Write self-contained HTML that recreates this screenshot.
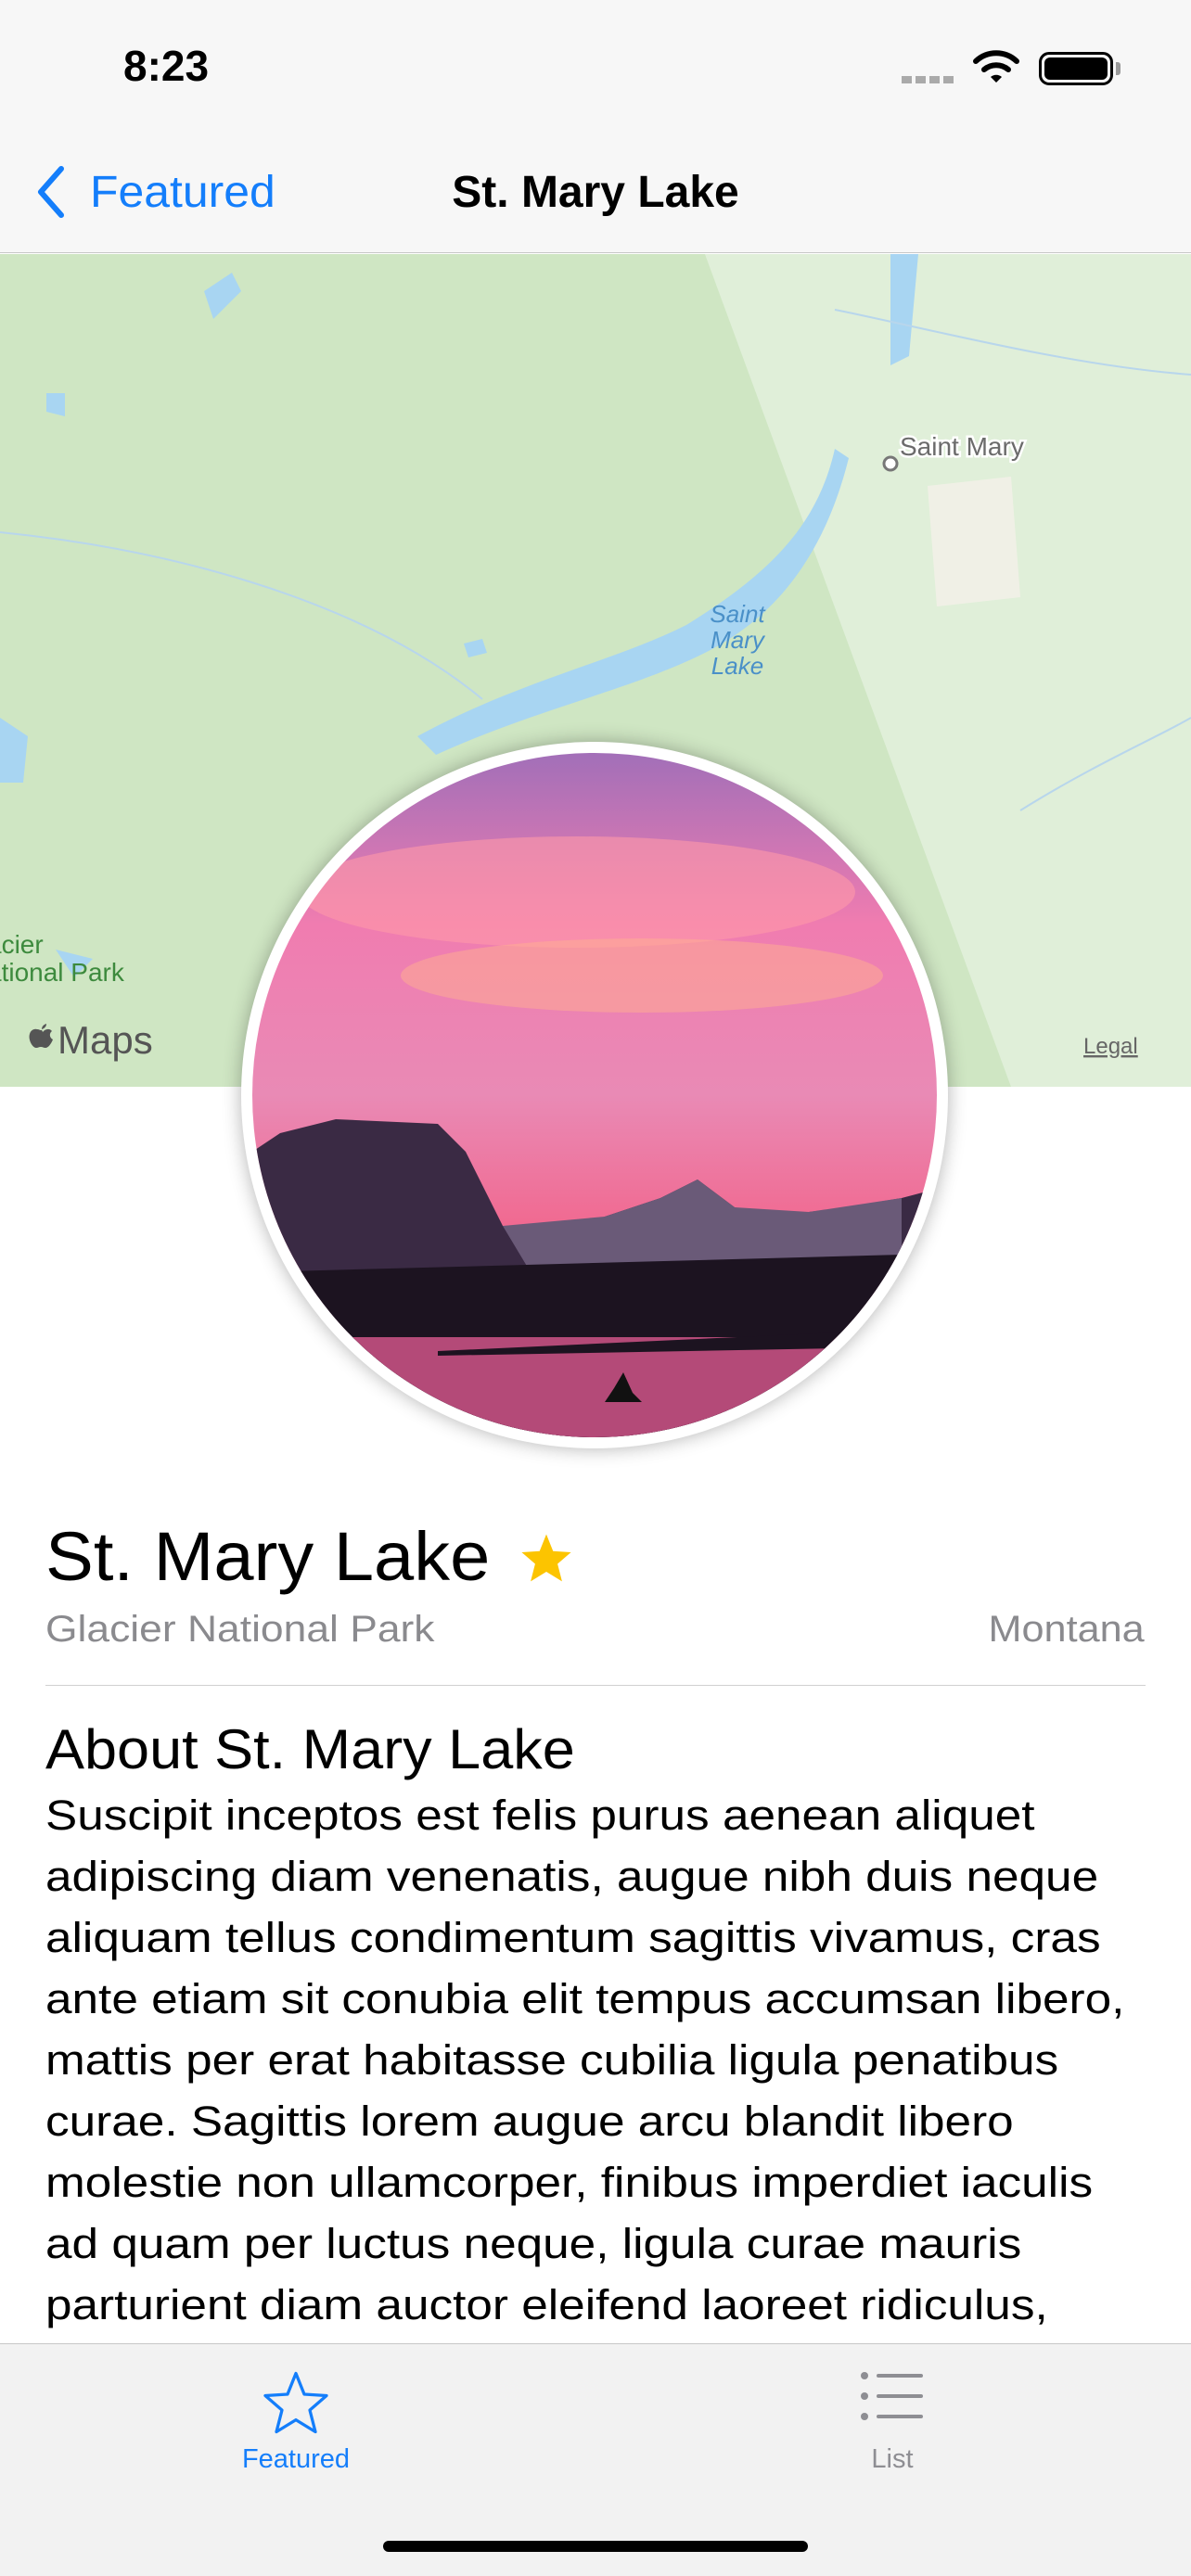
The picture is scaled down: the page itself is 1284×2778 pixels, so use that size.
<!DOCTYPE html>
<html><head><meta charset="utf-8"><style>
*{margin:0;padding:0;box-sizing:border-box}
body{width:1284px;height:2778px;background:#fff;font-family:"Liberation Sans",sans-serif;position:relative;overflow:hidden;color:#000}
.abs{position:absolute}
.sx{transform-origin:0 0}
</style></head><body>
<div class="abs" style="left:0;top:0;width:1284px;height:273px;background:#f7f7f7;border-bottom:1px solid #c8c8c8"></div>
<div class="abs" style="left:133px;top:44px;font-size:46px;font-weight:bold">8:23</div>
<div class="abs" style="left:972px;top:82px;width:56px;height:8px;background:repeating-linear-gradient(90deg,#aaa 0 11px,transparent 11px 15px)"></div>
<svg class="abs" style="left:1048px;top:52px" width="52" height="40" viewBox="0 0 52 40"><path d="M4 14 A32 32 0 0 1 48 14" stroke="#000" stroke-width="6" fill="none" stroke-linecap="round"/><path d="M13 23 A20 20 0 0 1 39 23" stroke="#000" stroke-width="6" fill="none" stroke-linecap="round"/><path d="M20 31 L26 37 L32 31 A9 9 0 0 0 20 31Z" fill="#000"/></svg>
<div class="abs" style="left:1120px;top:56px;width:80px;height:36px;border:3px solid #000;border-radius:11px;padding:3px"><div style="width:100%;height:100%;background:#000;border-radius:6px"></div></div>
<div class="abs" style="left:1203px;top:67px;width:5px;height:14px;background:#999;border-radius:0 3px 3px 0"></div>
<svg class="abs" style="left:36px;top:178px" width="36" height="58"><path d="M30 4 L8 29 L30 54" stroke="#147efb" stroke-width="6" fill="none" stroke-linecap="round" stroke-linejoin="round"/></svg>
<div class="abs sx" style="left:97px;top:180px;font-size:48px;color:#147efb;transform:scaleX(1.04)">Featured</div>
<div class="abs" style="left:0;width:1284px;top:180px;text-align:center;font-size:48px;font-weight:bold">St. Mary Lake</div>
<svg class="abs" style="left:0;top:274px" width="1284" height="898" viewBox="0 0 1284 898">
<rect width="1284" height="898" fill="#d6ebcc"/>
<path d="M0 0 H760 L1090 898 H0Z" fill="#cfe6c3"/>
<path d="M760 0 L1284 0 V898 H1090Z" fill="#e0efd9"/>
<path d="M1000 250 L1090 240 L1100 370 L1010 380Z" fill="#f0f0e6"/>
<path d="M960 0 L990 0 L980 110 L960 120Z" fill="#a8d5f2"/>
<path d="M900 210 C880 300 820 350 740 400 C660 440 560 460 450 520 L470 540 C580 490 680 470 760 430 C840 390 890 320 915 220Z" fill="#a8d5f2"/>
<path d="M220 40 l30 -20 l10 20 l-30 30z M50 150 l20 0 l0 25 l-20 -5z M0 500 l30 20 l-5 50 l-25 0z M500 420 l20 -5 l5 15 l-20 5z M60 750 l40 10 l-20 20z" fill="#a8d5f2"/>
<path d="M0 300 C200 320 400 380 520 480 M900 60 C1000 80 1150 120 1284 130 M1100 600 C1180 550 1250 520 1284 500" stroke="#b8d6ec" stroke-width="2" fill="none"/>
<circle cx="960" cy="226" r="7" fill="#fff" stroke="#777" stroke-width="3"/>
<text x="970" y="217" font-family="Liberation Sans" font-size="28" fill="#6b6b6b" stroke="#fff" stroke-width="5" paint-order="stroke">Saint Mary</text>
<text x="795" y="397" font-family="Liberation Sans" font-size="26" font-style="italic" fill="#4a90c8" text-anchor="middle">Saint</text>
<text x="795" y="425" font-family="Liberation Sans" font-size="26" font-style="italic" fill="#4a90c8" text-anchor="middle">Mary</text>
<text x="795" y="453" font-family="Liberation Sans" font-size="26" font-style="italic" fill="#4a90c8" text-anchor="middle">Lake</text>
<text x="-14" y="754" font-family="Liberation Sans" font-size="28" fill="#3d8a3d">acier</text>
<text x="-14" y="784" font-family="Liberation Sans" font-size="28" fill="#3d8a3d">ational Park</text>
<g fill="#555" transform="translate(30,830)"><path d="M16 9 C19 5 24 5 26 8 C23 10 23 15 27 17 C25 22 22 26 19 26 C17 26 16 25 14 25 C12 25 11 26 9 26 C5 26 0 17 2 11 C3 7 7 5 10 6 C12 6 13 7 14 7 C15 7 15 6 16 9Z"/><path d="M15 6 C15 3 17 1 20 0 C20 3 18 5 15 6Z"/></g>
<text x="62" y="862" font-family="Liberation Sans" font-size="42" fill="#555">Maps</text>
<text x="1168" y="862" font-family="Liberation Sans" font-size="24" fill="#666" text-decoration="underline">Legal</text>
</svg>
<div class="abs" style="left:260px;top:800px;width:762px;height:762px;border-radius:50%;background:#fff;box-shadow:0 0 20px rgba(0,0,0,.3)"></div>
<svg class="abs" style="left:272px;top:812px" width="738" height="738" viewBox="0 0 738 738">
<defs><clipPath id="c"><circle cx="369" cy="369" r="369"/></clipPath>
<linearGradient id="s" x1="0" y1="0" x2="0" y2="1"><stop offset="0" stop-color="#a26fb8"/><stop offset=".25" stop-color="#f07cb0"/><stop offset=".5" stop-color="#e98ab5"/><stop offset=".7" stop-color="#f1688f"/><stop offset="1" stop-color="#c0406a"/></linearGradient></defs>
<g clip-path="url(#c)">
<rect width="738" height="738" fill="url(#s)"/>
<ellipse cx="350" cy="150" rx="300" ry="60" fill="#ff9aa8" opacity=".6"/>
<ellipse cx="420" cy="240" rx="260" ry="40" fill="#ffb090" opacity=".5"/>
<path d="M0 430 L30 410 L90 395 L200 400 L230 430 L270 510 L330 520 L380 500 L440 480 L480 460 L520 490 L560 500 L600 495 L640 490 L700 480 L738 470 V738 H0Z" fill="#3a2a44"/>
<path d="M270 510 L380 500 L440 480 L480 460 L520 490 L600 495 L700 480 L700 560 L300 560Z" fill="#6a5a78"/>
<path d="M0 560 L738 540 V738 H0Z" fill="#1c1320"/>
<rect y="630" width="738" height="120" fill="#b44a78"/>
<path d="M200 645 L738 620 V640 L200 650Z" fill="#1c1320"/>
<path d="M380 700 L390 685 L400 668 L410 690 L420 700Z" fill="#111"/>
</g></svg>
<div class="abs sx" style="left:49px;top:1636px;font-size:74px;transform:scaleX(1.05)">St. Mary Lake</div>
<svg class="abs" style="left:560px;top:1652px" width="58" height="56" viewBox="0 0 24 23"><path d="M12 1 L15 8.5 L23 9 L17 14.2 L19 22 L12 17.7 L5 22 L7 14.2 L1 9 L9 8.5Z" fill="#fcc400"/></svg>
<div class="abs sx" style="left:49px;top:1735px;font-size:40px;color:#8a8a8e;transform:scaleX(1.11)">Glacier National Park</div>
<div class="abs" style="right:50px;top:1735px;font-size:40px;color:#8a8a8e;transform:scaleX(1.08);transform-origin:100% 0">Montana</div>
<div class="abs" style="left:49px;top:1817px;width:1186px;height:1px;background:#d0d0d0"></div>
<div class="abs sx" style="left:49px;top:1852px;font-size:60px;transform:scaleX(1.05)">About St. Mary Lake</div>
<div class="abs sx" style="left:49px;top:1925px;width:1200px;font-size:45px;line-height:66px;transform:scaleX(1.14)">Suscipit inceptos est felis purus aenean aliquet<br>adipiscing diam venenatis, augue nibh duis neque<br>aliquam tellus condimentum sagittis vivamus, cras<br>ante etiam sit conubia elit tempus accumsan libero,<br>mattis per erat habitasse cubilia ligula penatibus<br>curae. Sagittis lorem augue arcu blandit libero<br>molestie non ullamcorper, finibus imperdiet iaculis<br>ad quam per luctus neque, ligula curae mauris<br>parturient diam auctor eleifend laoreet ridiculus,</div>
<div class="abs" style="left:0;top:2527px;width:1284px;height:251px;background:#f2f2f2;border-top:1px solid #c8c8c8"></div>
<svg class="abs" style="left:283px;top:2556px" width="72" height="70" viewBox="0 0 24 23"><path d="M12 1 L15 8.5 L23 9 L17 14.2 L19 22 L12 17.7 L5 22 L7 14.2 L1 9 L9 8.5Z" fill="none" stroke="#147efb" stroke-width="1.1" stroke-linejoin="round"/></svg>
<div class="abs" style="left:219px;width:200px;top:2636px;text-align:center;font-size:29px;color:#147efb">Featured</div>
<svg class="abs" style="left:927px;top:2556px" width="70" height="56"><g fill="#8e8e93"><circle cx="5" cy="6" r="4"/><circle cx="5" cy="28" r="4"/><circle cx="5" cy="50" r="4"/><rect x="18" y="4" width="50" height="4" rx="2"/><rect x="18" y="26" width="50" height="4" rx="2"/><rect x="18" y="48" width="50" height="4" rx="2"/></g></svg>
<div class="abs" style="left:862px;width:200px;top:2636px;text-align:center;font-size:29px;color:#8e8e93">List</div>
<div class="abs" style="left:413px;top:2740px;width:458px;height:12px;border-radius:6px;background:#000"></div>
</body></html>
